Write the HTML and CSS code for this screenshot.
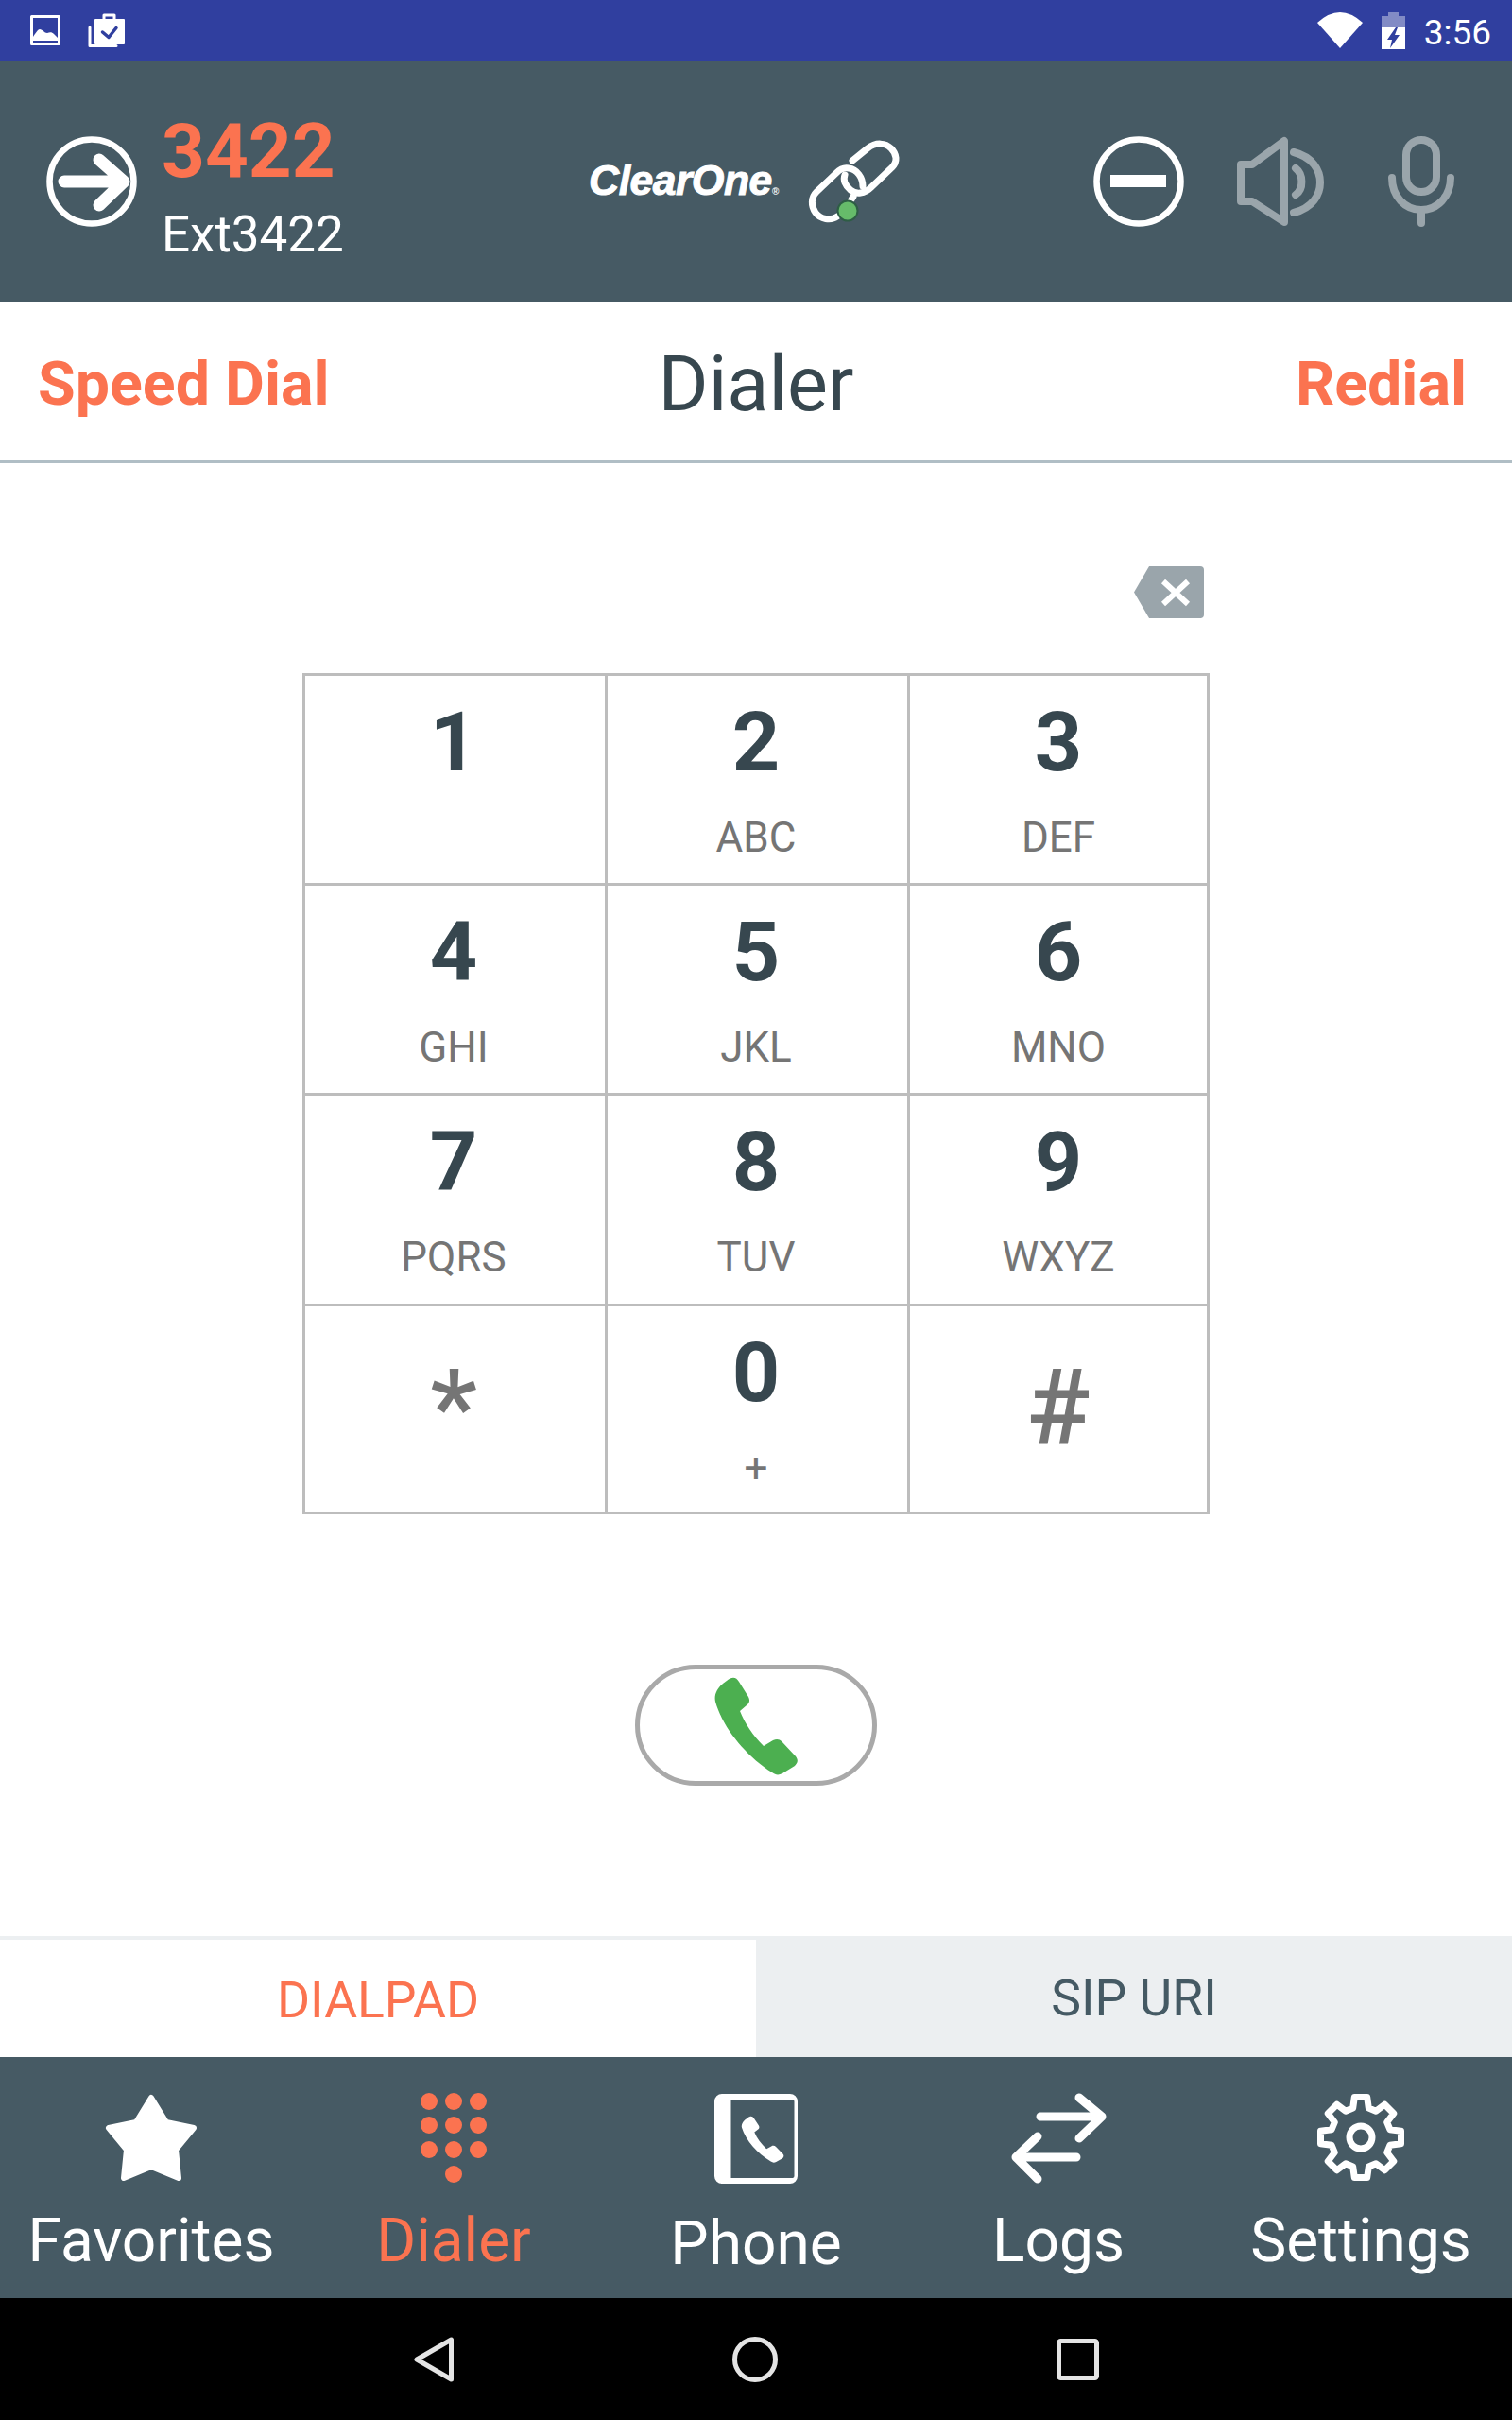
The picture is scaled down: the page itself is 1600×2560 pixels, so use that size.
FILE: index.html
```html
<!DOCTYPE html>
<html lang="en">
<head>
    <meta charset="UTF-8">
    <title>Dialer</title>
    <link rel="stylesheet" href="styles.css">
</head>
<body>
    <div class="app">
        <div class="status-bar">
            <div class="status-left">
                <svg class="ic-picture" viewBox="0 0 32 32">
                    <rect class="line-white" x="1.5" y="1.5" width="29" height="29"/>
                    <path class="fill-white" d="M3 27V23C5 20 8 15 10 15C13 15 15 19 18 19C21 18 23 18 25 20L29 24V27Z"/>
                </svg>
                <svg class="ic-bag" viewBox="0 0 40 38">
                    <path class="line-white" d="M2 16V35.5H30"/>
                    <path class="line-white" d="M17 8V3H28V8"/>
                    <rect class="fill-white" x="7" y="7" width="32" height="27" rx="1"/>
                    <path class="line-blue" d="M15.5 21L22 26.5L30 16.5"/>
                </svg>
            </div>
            <div class="status-right">
                <svg class="ic-wifi" viewBox="0 0 48 38">
                    <path class="fill-white" d="M0 11Q24 -11 48 11L24 38Z"/>
                </svg>
                <svg class="ic-battery" viewBox="0 0 25 39">
                    <path class="fill-faded" d="M7 0H18V4H25V16H0V4H7Z"/>
                    <rect class="fill-white" x="0" y="16" width="25" height="23"/>
                    <path class="fill-blue" d="M15 16L6 29H11L9 38L19 24H14L17 16Z"/>
                </svg>
                <span class="clock">3:56</span>
            </div>
        </div>

        <header class="top-bar">
            <div class="account">
                <svg class="ic-round" viewBox="0 0 96 96">
                    <circle class="line-white ring" cx="48" cy="48" r="44.5"/>
                    <path class="line-white arrow" d="M19 48H79M56 25L82 48L56 73"/>
                </svg>
                <div class="account-text">
                    <div class="account-number">3422</div>
                    <div class="account-name">Ext3422</div>
                </div>
            </div>
            <div class="brand">
                <span class="brand-name">ClearOne<span class="brand-mark">®</span></span>
                <svg class="ic-link" viewBox="0 0 96 88">
                    <path class="line-white link" d="M58 49C58 40 52 31 43 30C38 29 34 31 30 35L9 55C3 61 3 70 8 77C13 84 24 86 31 81M46 63L48 60"/>
                    <path class="line-white link" d="M47 22L63 9C72 2 82 3 88 9C94 15 95 23 89 29L67 50C60 57 51 58 45 53C39 48 37 42 39 37"/>
                    <circle class="link-dot" cx="42" cy="75" r="10.5"/>
                </svg>
            </div>
            <div class="controls">
                <svg class="ic-round" viewBox="0 0 96 96">
                    <circle class="line-white ring" cx="48" cy="48" r="44.5"/>
                    <rect class="fill-white" x="18" y="41" width="59" height="13"/>
                </svg>
                <svg class="ic-speaker" viewBox="0 0 92 96">
                    <path class="line-grey" d="M4 30H16L50 5V91L16 69H4Z"/>
                    <path class="line-grey" d="M60 17C80 22 88 36 88 49C88 62 80 76 60 81"/>
                    <path class="line-grey" d="M62 34C70 40 71 56 62 62"/>
                </svg>
                <svg class="ic-mic" viewBox="0 0 70 96">
                    <rect class="line-grey" x="19" y="4" width="32" height="55" rx="16"/>
                    <path class="line-grey" d="M4 44C4 64 18 78 35 78C52 78 66 64 66 44"/>
                    <path class="line-grey" d="M35 78V92"/>
                </svg>
            </div>
        </header>

        <div class="title-bar">
            <a class="title-link" href="#">Speed Dial</a>
            <h1>Dialer</h1>
            <a class="title-link title-link-right" href="#">Redial</a>
        </div>

        <main class="dial-area">
            <div class="number-row">
                <svg class="ic-backspace" viewBox="0 0 74 55">
                    <path class="fill-grey" d="M16 0H70A4 4 0 0 1 74 4V51A4 4 0 0 1 70 55H16L0 27.5Z"/>
                    <path class="line-white cross" d="M31 16L57 40M57 16L31 40"/>
                </svg>
            </div>
            <div class="keypad">
                <div class="key"><span class="digit">1</span></div>
                <div class="key"><span class="digit">2</span><span class="letters">ABC</span></div>
                <div class="key"><span class="digit">3</span><span class="letters">DEF</span></div>
                <div class="key"><span class="digit">4</span><span class="letters">GHI</span></div>
                <div class="key"><span class="digit">5</span><span class="letters">JKL</span></div>
                <div class="key"><span class="digit">6</span><span class="letters">MNO</span></div>
                <div class="key"><span class="digit">7</span><span class="letters">PQRS</span></div>
                <div class="key"><span class="digit">8</span><span class="letters">TUV</span></div>
                <div class="key"><span class="digit">9</span><span class="letters">WXYZ</span></div>
                <div class="key"><span class="symbol">*</span></div>
                <div class="key"><span class="digit">0</span><span class="letters">+</span></div>
                <div class="key"><span class="symbol">#</span></div>
            </div>
            <button class="call-button" type="button">
                <svg class="ic-call" viewBox="0 0 90 105">
                    <path class="fill-green" d="M14 5C20 0 24 1 27 6L37 22C39 26 38 29 35 31L28 37C33 50 42 63 53 74L63 68C67 66 70 67 72 69L87 85C90 89 89 92 86 95L73 103C69 105 66 105 62 102C34 84 10 55 2 27C0 18 6 10 14 5Z"/>
                </svg>
            </button>
        </main>

        <div class="tabs">
            <div class="tab tab-active">DIALPAD</div>
            <div class="tab">SIP URI</div>
        </div>

        <nav class="bottom-nav">
            <a class="nav-item" href="#">
                <svg class="nav-icon" viewBox="0 0 96 96">
                    <path class="star" d="M48 6L64 32L93 38L74 61L77 91L48 79L19 91L22 61L3 38L32 32Z"/>
                </svg>
                <span class="nav-label">Favorites</span>
            </a>
            <a class="nav-item nav-item-active" href="#">
                <svg class="nav-icon" viewBox="0 0 96 96">
                    <circle class="fill-orange" cx="22" cy="10" r="9"/>
                    <circle class="fill-orange" cx="48" cy="10" r="9"/>
                    <circle class="fill-orange" cx="74" cy="10" r="9"/>
                    <circle class="fill-orange" cx="22" cy="35" r="9"/>
                    <circle class="fill-orange" cx="48" cy="35" r="9"/>
                    <circle class="fill-orange" cx="74" cy="35" r="9"/>
                    <circle class="fill-orange" cx="22" cy="61" r="9"/>
                    <circle class="fill-orange" cx="48" cy="61" r="9"/>
                    <circle class="fill-orange" cx="74" cy="61" r="9"/>
                    <circle class="fill-orange" cx="48" cy="87" r="9"/>
                </svg>
                <span class="nav-label">Dialer</span>
            </a>
            <a class="nav-item nav-item-low" href="#">
                <svg class="nav-icon" viewBox="0 0 96 96">
                    <path class="fill-white" d="M12 2H84A8 8 0 0 1 92 10V89A8 8 0 0 1 84 97H12A8 8 0 0 1 4 89V10A8 8 0 0 1 12 2ZM21.500 8V91H87A2 2 0 0 0 88.500 89V10A2 2 0 0 0 87 8Z"/>
                    <svg x="32" y="25" width="46" height="50" viewBox="0 0 90 105" preserveAspectRatio="none">
                        <path class="fill-white" d="M14 5C20 0 24 1 27 6L37 22C39 26 38 29 35 31L28 37C33 50 42 63 53 74L63 68C67 66 70 67 72 69L87 85C90 89 89 92 86 95L73 103C69 105 66 105 62 102C34 84 10 55 2 27C0 18 6 10 14 5Z"/>
                    </svg>
                </svg>
                <span class="nav-label">Phone</span>
            </a>
            <a class="nav-item" href="#">
                <svg class="nav-icon" viewBox="0 0 96 96">
                    <path class="line-white swap" d="M29 26H93M70 6L94 26L70 49"/>
                    <path class="line-white swap" d="M67 69H3M26 47L3 69L26 92"/>
                </svg>
                <span class="nav-label">Logs</span>
            </a>
            <a class="nav-item" href="#">
                <svg class="nav-icon" viewBox="0 0 96 96">
                    <path class="line-white gear" d="M41.3 5.5H54.7L56.3 17.1L64 20.3L73.3 13.2L82.8 22.7L75.7 32L78.9 39.7L90.5 41.3V54.7L78.9 56.3L75.7 64L82.8 73.3L73.3 82.8L64 75.7L56.3 78.9L54.7 90.5H41.3L39.7 78.9L32 75.7L22.7 82.8L13.2 73.3L20.3 64L17.1 56.3L5.5 54.7V41.3L17.1 39.7L20.3 32L13.2 22.7L22.7 13.2L32 20.3L39.7 17.1Z"/>
                    <circle class="line-white gear" cx="48" cy="48" r="12"/>
                </svg>
                <span class="nav-label">Settings</span>
            </a>
        </nav>

        <div class="system-bar">
            <svg class="ic-back" viewBox="0 0 42 48">
                <path class="line-soft" d="M39.5 3V45L3 24Z"/>
            </svg>
            <svg class="ic-home" viewBox="0 0 48 48">
                <circle class="line-soft" cx="24" cy="24" r="21.5"/>
            </svg>
            <svg class="ic-recent" viewBox="0 0 45 44">
                <rect class="line-soft" x="2.5" y="2.5" width="40" height="39" rx="2"/>
            </svg>
        </div>
    </div>
</body>
</html>
```

FILE: styles.css
```css
* {
    margin: 0;
    padding: 0;
    box-sizing: border-box;
}
body {
    background-color: #fff;
    font-family: Roboto, "Liberation Sans", sans-serif;
}
a {
    text-decoration: none;
    color: inherit;
}
svg {
    display: block;
    flex: none;
    overflow: visible;
}
.app {
    display: flex;
    flex-direction: column;
    width: 1600px;
    height: 2560px;
    overflow: hidden;
}

/* shared svg paints */
.fill-white { fill: #fff; }
.fill-faded { fill: #fff; opacity: 0.4; }
.fill-blue { fill: #303f9f; }
.fill-grey { fill: #9aa5ab; }
.fill-green { fill: #4caf50; }
.fill-orange { fill: #fb7350; }
.line-white,
.line-grey,
.line-blue,
.line-soft {
    fill: none;
    stroke-linecap: round;
    stroke-linejoin: round;
}
.line-white { stroke: #fff; stroke-width: 3; }
.line-grey { stroke: #9aa5ab; stroke-width: 8; }
.line-blue { stroke: #303f9f; stroke-width: 3.5; }
.line-soft { stroke: #e4e4e4; stroke-width: 5; }

/* status bar */
.status-bar {
    display: flex;
    justify-content: space-between;
    align-items: center;
    height: 64px;
    padding: 0 22px 0 32px;
    background-color: #303f9f;
    color: #fff;
}
.status-left,
.status-right {
    display: flex;
    align-items: center;
}
.status-left { gap: 29px; }
.status-right { gap: 20px; }
.ic-picture { width: 32px; height: 32px; }
.ic-bag { width: 40px; height: 38px; }
.ic-wifi { width: 48px; height: 38px; }
.ic-battery { width: 25px; height: 39px; }
.clock {
    font-size: 37px;
    line-height: 37px;
    margin-top: 5px;
}

/* account bar */
.top-bar {
    display: grid;
    grid-template-columns: 623px auto 1fr;
    align-items: center;
    height: 256px;
    background-color: #465a64;
    color: #fff;
}
.account {
    display: flex;
    align-items: center;
    gap: 26px;
    padding-left: 49px;
}
.ic-round { width: 96px; height: 96px; }
.ring { stroke-width: 6.5; }
.arrow { stroke-width: 13; }
.account-text { padding-top: 11px; }
.account-number {
    font-size: 80px;
    line-height: 80px;
    font-weight: 700;
    color: #fb7350;
}
.account-name {
    font-size: 53px;
    line-height: 53px;
    margin-top: 22px;
}
.brand {
    display: flex;
    align-items: center;
    gap: 31px;
}
.brand-name {
    font-family: "Liberation Sans", Arial, sans-serif;
    font-size: 44.5px;
    line-height: 44px;
    font-weight: 700;
    font-style: italic;
    letter-spacing: -0.5px;
    margin-top: 10px;
    -webkit-text-stroke: 1px #fff;
}
.brand-mark {
    font-size: 10px;
    font-style: normal;
    letter-spacing: 0;
    -webkit-text-stroke: 0;
}
.ic-link { width: 96px; height: 88px; }
.link { stroke-width: 7; }
.link-dot {
    fill: #66bb6a;
    stroke: #2e5d45;
    stroke-width: 2;
}
.controls {
    display: flex;
    justify-content: flex-end;
    align-items: center;
    padding-right: 61px;
}
.ic-speaker {
    width: 92px;
    height: 96px;
    margin: 0 68px 0 56px;
}
.ic-mic { width: 70px; height: 96px; }

/* title bar */
.title-bar {
    display: grid;
    grid-template-columns: 1fr auto 1fr;
    align-items: center;
    height: 170px;
    padding: 6px 40px 0;
    border-bottom: 3px solid #b0bec5;
}
.title-bar h1 {
    font-size: 81px;
    line-height: 81px;
    font-weight: 400;
    color: #37474f;
}
.title-link {
    font-size: 64.5px;
    line-height: 65px;
    font-weight: 700;
    color: #fb7350;
}
.title-link-right {
    text-align: right;
    margin-right: 8px;
}

/* keypad */
.dial-area {
    flex: 1;
    padding: 109px 320px 0;
}
.number-row {
    display: flex;
    justify-content: flex-end;
    padding-right: 6px;
    margin-bottom: 58px;
}
.ic-backspace { width: 74px; height: 55px; }
.cross { stroke-width: 6; stroke-linecap: butt; }
.keypad {
    display: grid;
    grid-template-columns: 320px 320px 317px;
    grid-template-rows: 222px 222px 223px 220px;
    border-top: 3px solid #bdbdbd;
    border-left: 3px solid #bdbdbd;
}
.key {
    display: flex;
    flex-direction: column;
    align-items: center;
    border-right: 3px solid #bdbdbd;
    border-bottom: 3px solid #bdbdbd;
    padding: 26px 3px 0 0;
}
.key:nth-child(3n) { padding-right: 0; }
.digit {
    font-size: 88px;
    line-height: 88px;
    font-weight: 700;
    color: #37474f;
}
.letters {
    font-size: 44px;
    line-height: 44px;
    margin-top: 35px;
    color: #757575;
}
.symbol {
    font-size: 112px;
    line-height: 112px;
    font-weight: 500;
    margin-top: 25px;
    color: #757575;
}
.call-button {
    display: flex;
    justify-content: center;
    align-items: center;
    width: 256px;
    height: 128px;
    margin: 159px auto 0;
    background-color: #fff;
    border: 5px solid #a9a9a9;
    border-radius: 64px;
}
.ic-call { width: 90px; height: 105px; }

/* tabs */
.tabs {
    display: grid;
    grid-template-columns: 1fr 1fr;
    height: 128px;
}
.tab {
    display: flex;
    justify-content: center;
    align-items: center;
    padding-top: 2px;
    font-size: 53.5px;
    background-color: #eceff1;
    color: #455a64;
}
.tab-active {
    background-color: #fff;
    border-top: 4px solid #eceff1;
    color: #fb7350;
}

/* bottom navigation */
.bottom-nav {
    display: grid;
    grid-template-columns: repeat(5, 1fr);
    height: 255px;
    background-color: #465a64;
    color: #fff;
}
.nav-item {
    display: flex;
    flex-direction: column;
    align-items: center;
    padding-top: 37px;
}
.nav-item-active { color: #fb7350; }
.nav-icon { width: 96px; height: 96px; }
.nav-label {
    font-size: 64px;
    line-height: 64px;
    margin-top: 30px;
}
.nav-item-low .nav-label { margin-top: 33px; }
.star {
    fill: #fff;
    stroke: #fff;
    stroke-width: 6;
    stroke-linejoin: round;
}
.swap { stroke-width: 9; }
.gear { stroke-width: 7; }

/* android buttons */
.system-bar {
    display: flex;
    justify-content: center;
    align-items: center;
    gap: 295px;
    flex: none;
    height: 129px;
    background-color: #000;
}
.ic-back { width: 42px; height: 48px; }
.ic-home { width: 48px; height: 48px; }
.ic-recent { width: 45px; height: 44px; }
```
